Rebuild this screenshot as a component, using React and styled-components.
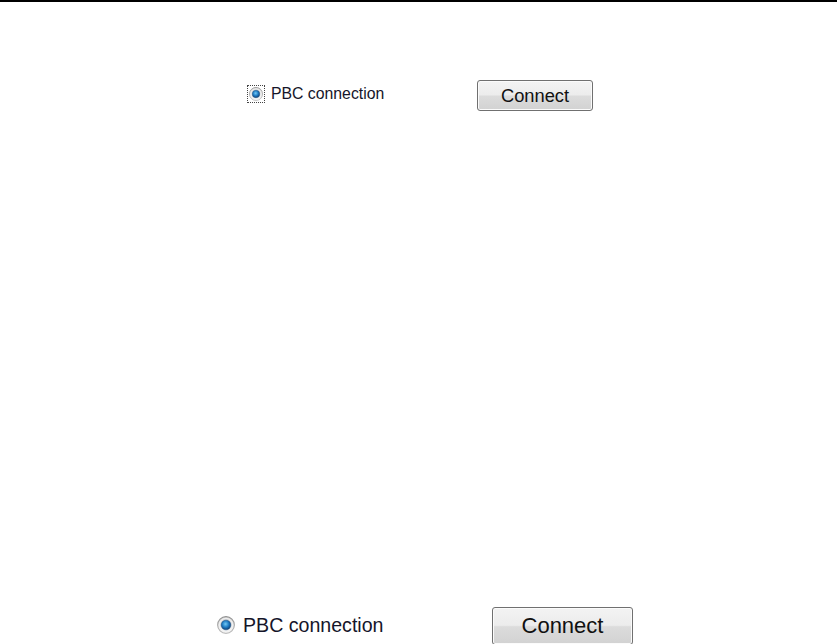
import React from "react";
import styled, { createGlobalStyle } from "styled-components";

const GlobalStyle = createGlobalStyle`
  body {
    margin: 0;
    background: #fff;
    font-family: "Liberation Sans", Arial, sans-serif;
  }
`;

const Page = styled.div`
  width: 837px;
  height: 644px;
  overflow: hidden;
  display: flex;
  flex-direction: column;
  background: #fff;
`;

const TopRule = styled.div`
  height: 2px;
  background: #000;
  flex-shrink: 0;
`;

const Row = styled.div`
  display: flex;
  align-items: center;
  flex-shrink: 0;
  padding-left: ${(p) => p.$left}px;
  margin-top: ${(p) => p.$top}px;
`;

const Option = styled.label`
  display: flex;
  align-items: center;
  width: ${(p) => p.$width}px;
  gap: ${(p) => p.$gap}px;
  font-size: ${(p) => p.$size}px;
  color: #15152a;
  margin-top: ${(p) => p.$shift}px;
`;

const Focus = styled.span`
  display: flex;
  align-items: center;
  justify-content: center;
  width: ${(p) => p.$box}px;
  height: ${(p) => p.$box}px;
  box-sizing: border-box;
  border: ${(p) => (p.$focused ? "1px dotted #444" : "none")};
`;

const Button = styled.button`
  width: ${(p) => p.$w}px;
  height: ${(p) => p.$h}px;
  font-family: "Liberation Sans", Arial, sans-serif;
  font-size: ${(p) => p.$size}px;
  color: #111;
  padding: 0;
  border: 1px solid #707070;
  border-radius: 3px;
  background: linear-gradient(#f3f3f3 0%, #ececec 48%, #dcdcdc 52%, #d2d2d2 100%);
  box-shadow: inset 0 0 0 1px #fbfbfb;
`;

const Radio = ({ size }) => (
  <svg width={size} height={size} viewBox="0 0 20 20">
    <defs>
      <linearGradient id="ring" x1="0" y1="0" x2="0" y2="1">
        <stop offset="0" stopColor="#8f8f8f" />
        <stop offset="1" stopColor="#bdbdbd" />
      </linearGradient>
      <linearGradient id="inner" x1="0" y1="0" x2="0" y2="1">
        <stop offset="0" stopColor="#d8d8d8" />
        <stop offset="1" stopColor="#f8f8f8" />
      </linearGradient>
      <radialGradient id="dot" cx="0.45" cy="0.4" r="0.6">
        <stop offset="0" stopColor="#72c8f4" />
        <stop offset="0.55" stopColor="#1f7cc4" />
        <stop offset="1" stopColor="#0f3f74" />
      </radialGradient>
    </defs>
    <circle cx="10" cy="10" r="9.3" fill="url(#inner)" stroke="url(#ring)" strokeWidth="1.2" />
    <circle cx="10" cy="10" r="7.4" fill="none" stroke="#f2f2f2" strokeWidth="1" />
    <circle cx="10" cy="10" r="5.4" fill="url(#dot)" stroke="#1c4f82" strokeWidth="0.6" />
  </svg>
);

const ConnectRow = ({ left, top, width, gap, text, box, radio, focused, shift, btn }) => (
  <Row $left={left} $top={top}>
    <Option $width={width} $gap={gap} $size={text} $shift={shift}>
      <Focus $box={box} $focused={focused}>
        <Radio size={radio} />
      </Focus>
      PBC connection
    </Option>
    <Button $w={btn.w} $h={btn.h} $size={btn.size}>
      Connect
    </Button>
  </Row>
);

export default function App() {
  return (
    <>
      <GlobalStyle />
      <Page>
        <TopRule />
        <ConnectRow
          left={247}
          top={78}
          width={230}
          gap={6}
          text={15.8}
          box={18}
          radio={14}
          focused
          shift={-3}
          btn={{ w: 116, h: 31, size: 18.3 }}
        />
        <ConnectRow
          left={217}
          top={496}
          width={275}
          gap={8}
          text={19.6}
          box={18}
          radio={18}
          shift={-2}
          btn={{ w: 141, h: 38, size: 22 }}
        />
      </Page>
    </>
  );
}
